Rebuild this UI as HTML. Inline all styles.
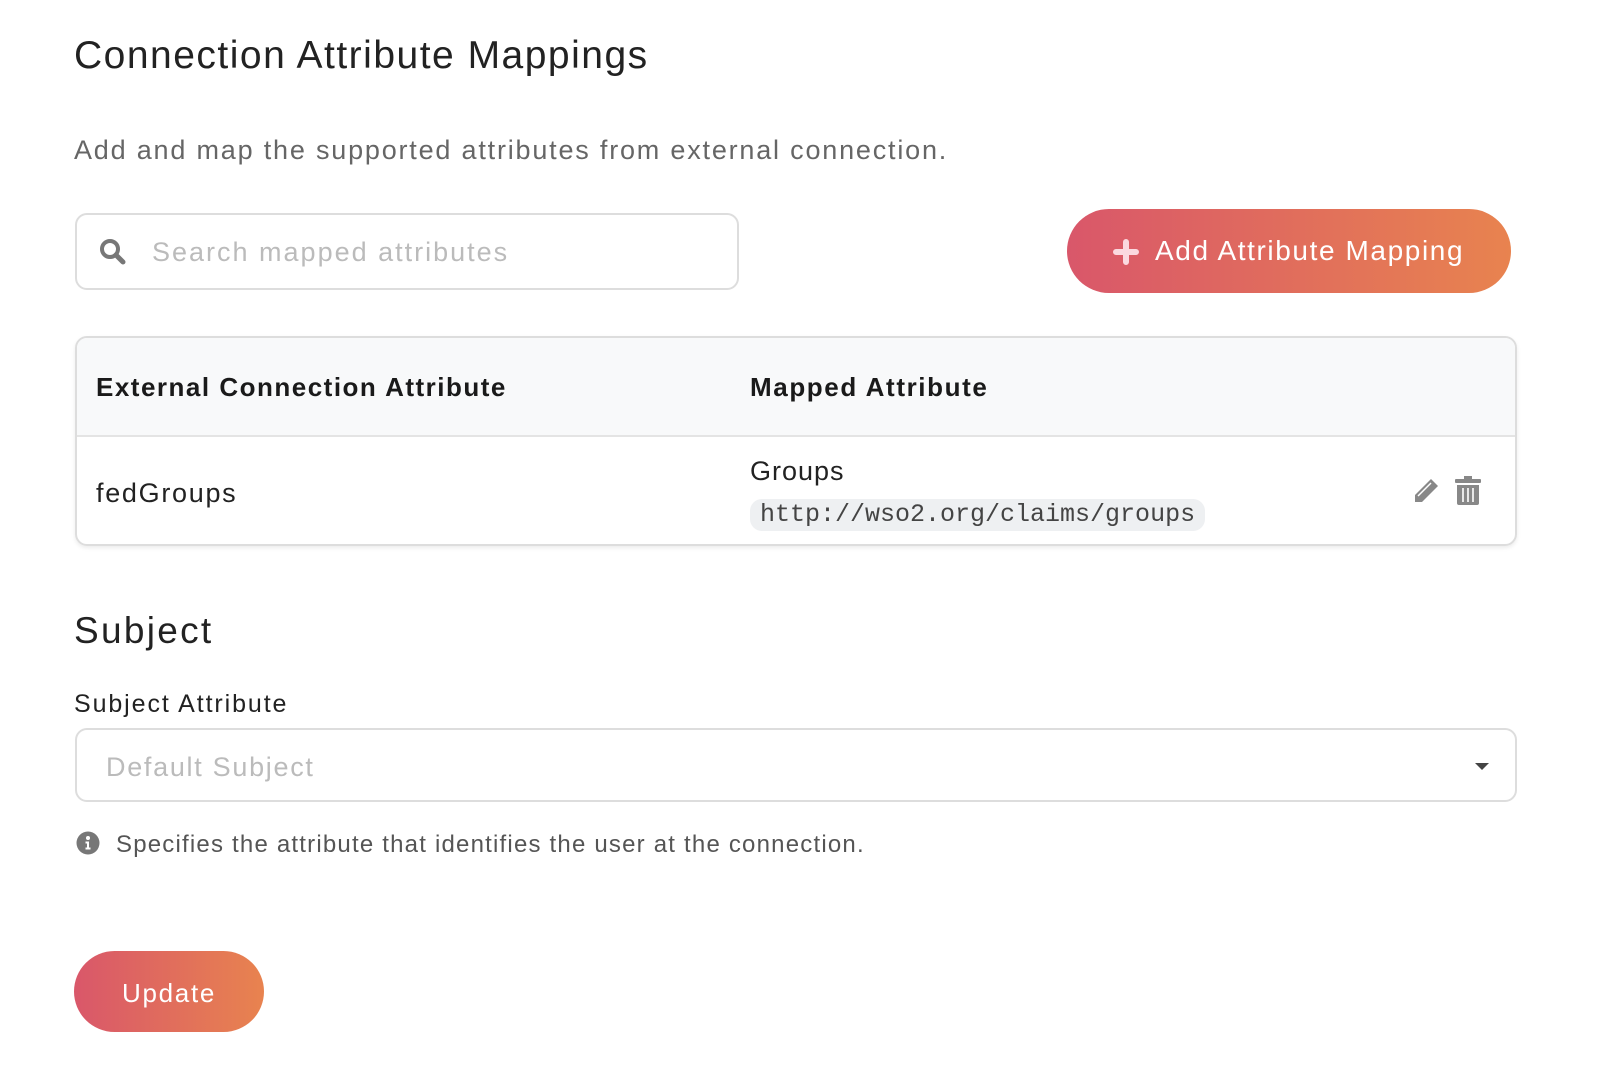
<!DOCTYPE html>
<html><head><meta charset="utf-8"><style>
*{margin:0;padding:0;box-sizing:border-box}
body{width:1604px;height:1072px;background:#fff;font-family:"Liberation Sans",sans-serif;color:#222;position:relative;overflow:hidden}
.a{position:absolute;white-space:nowrap}
.grad{background:linear-gradient(90deg,#d9576a,#e8834f);color:#fff;border-radius:50px}
</style></head><body>
<div class="a" style="left:74px;top:34px;font-size:39px;color:#222;letter-spacing:1.5px">Connection Attribute Mappings</div>
<div class="a" style="left:74px;top:135px;font-size:27px;color:#666;letter-spacing:1.8px">Add and map the supported attributes from external connection.</div>

<div class="a" style="left:75px;top:213px;width:664px;height:77px;border:2px solid #ddd;border-radius:12px"></div>
<svg class="a" style="left:98px;top:237px" width="30" height="30" viewBox="0 0 30 30"><circle cx="12" cy="12" r="8" fill="none" stroke="#777" stroke-width="4"/><path d="M18 18l7 7" stroke="#777" stroke-width="5" stroke-linecap="round"/></svg>
<div class="a" style="left:152px;top:237px;font-size:27px;color:#bbb;letter-spacing:2px">Search mapped attributes</div>

<div class="a grad" style="left:1067px;top:209px;width:444px;height:84px"></div>
<svg class="a" style="left:1113px;top:239px" width="26" height="26" viewBox="0 0 26 26"><path d="M13 3v20M3 13h20" stroke="#fbd9df" stroke-width="6" stroke-linecap="round"/></svg>
<div class="a" style="left:1155px;top:235px;font-size:28px;color:#fff;letter-spacing:1.6px">Add Attribute Mapping</div>

<div class="a" style="left:75px;top:336px;width:1442px;height:210px;border:2px solid #ddd;border-radius:12px;box-shadow:0 2px 4px rgba(0,0,0,.08);overflow:hidden">
 <div style="height:99px;background:#f8f9fa;border-bottom:2px solid #e4e4e4"></div>
</div>
<div class="a" style="left:96px;top:372px;font-size:26px;font-weight:bold;color:#1a1a1a;letter-spacing:1.5px">External Connection Attribute</div>
<div class="a" style="left:750px;top:372px;font-size:26px;font-weight:bold;color:#1a1a1a;letter-spacing:1.6px">Mapped Attribute</div>
<div class="a" style="left:96px;top:478px;font-size:27px;color:#222;letter-spacing:1.7px">fedGroups</div>
<div class="a" style="left:750px;top:456px;font-size:27px;color:#222;letter-spacing:1px">Groups</div>
<div class="a" style="left:750px;top:499px;height:32px;padding:0 10px;background:#eef0f2;border-radius:12px;font-family:'Liberation Mono',monospace;font-size:25px;line-height:32px;color:#444">http://wso2.org/claims/groups</div>
<svg class="a" style="left:1409px;top:476px" width="32" height="32" viewBox="0 0 32 32"><path d="M22 3l7 7-16 16H6v-7z" fill="#888"/><path d="M9 20l13-13" stroke="#fff" stroke-width="1.5"/></svg>
<svg class="a" style="left:1455px;top:476px" width="26" height="30" viewBox="0 0 26 30"><rect x="0" y="3" width="26" height="4" rx="1" fill="#888"/><rect x="9" y="0" width="8" height="4" fill="#888"/><path d="M2 9h22v18a2 2 0 0 1-2 2H4a2 2 0 0 1-2-2z" fill="#888"/><path d="M8 12v14M13 12v14M18 12v14" stroke="#fff" stroke-width="1.6"/></svg>

<div class="a" style="left:74px;top:610px;font-size:37px;color:#222;letter-spacing:2.3px">Subject</div>
<div class="a" style="left:74px;top:690px;font-size:25px;color:#222;letter-spacing:1.9px">Subject Attribute</div>
<div class="a" style="left:75px;top:728px;width:1442px;height:74px;border:2px solid #ddd;border-radius:12px"></div>
<div class="a" style="left:106px;top:752px;font-size:27px;color:#bbb;letter-spacing:1.7px">Default Subject</div>
<svg class="a" style="left:1474px;top:762px" width="16" height="10" viewBox="0 0 16 10"><path d="M1 1h14L8 8z" fill="#444"/></svg>
<svg class="a" style="left:76px;top:831px" width="24" height="24" viewBox="0 0 24 24"><circle cx="12" cy="12" r="11.5" fill="#777"/><circle cx="12" cy="7" r="2" fill="#fff"/><path d="M9.5 10.5h3.5v6h1.5v2h-5v-2h1.5v-4h-1.5z" fill="#fff"/></svg>
<div class="a" style="left:116px;top:831px;font-size:24px;color:#555;letter-spacing:1.2px">Specifies the attribute that identifies the user at the connection.</div>

<div class="a grad" style="left:74px;top:951px;width:190px;height:81px"></div>
<div class="a" style="left:122px;top:978px;font-size:26px;color:#fff;letter-spacing:1.7px">Update</div>
</body></html>
